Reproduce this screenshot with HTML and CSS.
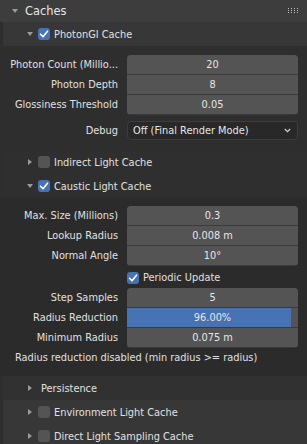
FILE: index.html
```html
<!DOCTYPE html>
<html>
<head>
<meta charset="utf-8">
<link rel="stylesheet" href="styles.css">
</head>
<body>
<div class="panel">
  <div class="hdr main">
    <svg class="tri" width="6" height="6" viewBox="0 0 6 6"><polygon points="0,1 6,1 3,5" /></svg>
    <span class="title">Caches</span>
    <svg class="grip" width="11" height="6" viewBox="0 0 11 6">
      <rect x="0" y="0" width="1" height="1"/><rect x="3" y="0" width="1" height="1"/><rect x="6" y="0" width="1" height="1"/><rect x="9" y="0" width="1" height="1"/>
      <rect x="0" y="2" width="1" height="1"/><rect x="3" y="2" width="1" height="1"/><rect x="6" y="2" width="1" height="1"/><rect x="9" y="2" width="1" height="1"/>
      <rect x="0" y="4" width="1" height="1"/><rect x="3" y="4" width="1" height="1"/><rect x="6" y="4" width="1" height="1"/><rect x="9" y="4" width="1" height="1"/>
    </svg>
  </div>

  <div class="hdr sub open">
    <svg class="tri" width="6" height="6" viewBox="0 0 6 6"><polygon points="0,1 6,1 3,5" /></svg>
    <span class="cb on"><svg width="12" height="12" viewBox="0 0 12 12"><polyline points="2.5,6.2 5,8.7 9.5,3.2"/></svg></span>
    <span class="title">PhotonGI Cache</span>
  </div>
  <div class="body photon">
    <div class="group">
      <div class="labels">
        <div class="lbl">Photon Count (Millio...</div>
        <div class="lbl">Photon Depth</div>
        <div class="lbl">Glossiness Threshold</div>
      </div>
      <div class="fields">
        <div class="field">20</div>
        <div class="field">8</div>
        <div class="field">0.05</div>
      </div>
    </div>
    <div class="group debug">
      <div class="labels"><div class="lbl">Debug</div></div>
      <div class="menu"><span>Off (Final Render Mode)</span>
        <svg class="chev" width="7" height="5" viewBox="0 0 7 5"><polyline points="0.8,1 3.5,3.7 6.2,1"/></svg>
      </div>
    </div>
  </div>

  <div class="hdr sub closed">
    <svg class="tri" width="6" height="6" viewBox="0 0 6 6"><polygon points="1,0 5,3 1,6" /></svg>
    <span class="cb"></span>
    <span class="title">Indirect Light Cache</span>
  </div>
  <div class="hdr sub open2">
    <svg class="tri" width="6" height="6" viewBox="0 0 6 6"><polygon points="0,1 6,1 3,5" /></svg>
    <span class="cb on"><svg width="12" height="12" viewBox="0 0 12 12"><polyline points="2.5,6.2 5,8.7 9.5,3.2"/></svg></span>
    <span class="title">Caustic Light Cache</span>
  </div>
  <div class="body caustic">
    <div class="group">
      <div class="labels">
        <div class="lbl">Max. Size (Millions)</div>
        <div class="lbl">Lookup Radius</div>
        <div class="lbl">Normal Angle</div>
      </div>
      <div class="fields">
        <div class="field">0.3</div>
        <div class="field">0.008 m</div>
        <div class="field">10°</div>
      </div>
    </div>
    <div class="checkrow">
      <span class="cb on"><svg width="12" height="12" viewBox="0 0 12 12"><polyline points="2.5,6.2 5,8.7 9.5,3.2"/></svg></span>
      <span class="clabel">Periodic Update</span>
    </div>
    <div class="group">
      <div class="labels">
        <div class="lbl">Step Samples</div>
        <div class="lbl">Radius Reduction</div>
        <div class="lbl">Minimum Radius</div>
      </div>
      <div class="fields">
        <div class="field">5</div>
        <div class="field slider"><div class="fill" style="width:96%"></div><span>96.00%</span></div>
        <div class="field">0.075 m</div>
      </div>
    </div>
    <div class="info">Radius reduction disabled (min radius &gt;= radius)</div>
  </div>

  <div class="hdr sub persist">
    <svg class="tri" width="6" height="6" viewBox="0 0 6 6"><polygon points="1,0 5,3 1,6" /></svg>
    <span class="title">Persistence</span>
  </div>
  <div class="hdr sub env">
    <svg class="tri" width="6" height="6" viewBox="0 0 6 6"><polygon points="1,0 5,3 1,6" /></svg>
    <span class="cb"></span>
    <span class="title">Environment Light Cache</span>
  </div>
  <div class="hdr sub env">
    <svg class="tri" width="6" height="6" viewBox="0 0 6 6"><polygon points="1,0 5,3 1,6" /></svg>
    <span class="cb"></span>
    <span class="title">Direct Light Sampling Cache</span>
  </div>
</div>
</body>
</html>
```
FILE: styles.css
```css
* { box-sizing: border-box; }
html, body { margin: 0; padding: 0; }
body {
  width: 307px;
  height: 444px;
  overflow: hidden;
  background: #2e2e2e;
  font-family: "DejaVu Sans", sans-serif;
  font-size: 9.8px;
  color: #e1e1e1;
}
.panel { display: flex; flex-direction: column; }

.hdr {
  display: flex;
  align-items: center;
  white-space: nowrap;
}
.hdr .tri { fill: #9a9a9a; flex: none; }
.hdr.main {
  height: 22px;
  background: #3d3d3d;
  padding-left: 12px;
  font-size: 11.4px;
}
.hdr.main .title { margin-left: 7px; color: #e6e6e6; }
.hdr.main .grip { margin-left: auto; margin-right: 8px; fill: #bdbdbd; }

.hdr.sub {
  height: 24px;
  padding-left: 24px;
  background: #373737;
  border-left: 3px solid #2e2e2e;
}
.hdr.sub .cb { margin-left: 5px; }
.hdr.sub .title { margin-left: 4px; }
.hdr.sub.closed, .hdr.sub.open2 { background: #2f2f2f; border-left-color: #2e2e2e; }
.hdr.persist { background: #313131; }
.hdr.persist .title { margin-left: 8px; }
.hdr.env { background: #373737; }

.cb {
  width: 12px;
  height: 12px;
  border-radius: 3px;
  background: #545454;
  display: inline-flex;
  flex: none;
}
.cb.on { background: #4772b3; }
.cb svg polyline { fill: none; stroke: #ffffff; stroke-width: 1.6; stroke-linecap: round; stroke-linejoin: round; }

.body { padding-right: 9px; }
.body.photon { padding-top: 9px; padding-bottom: 9px; background: #2e2e2e; }
.body.caustic { padding-top: 8px; padding-bottom: 8px; background: #2b2b2b; }

.group { display: flex; }
.labels { width: 118px; margin-right: 9px; flex: none; }
.lbl {
  height: 20px;
  line-height: 20px;
  text-align: right;
  white-space: nowrap;
  overflow: hidden;
}
.fields {
  width: 171px;
  display: flex;
  flex-direction: column;
  gap: 1px;
  border-radius: 4px;
  overflow: hidden;
  background: #3b3b3b;
}
.field {
  height: 19px;
  line-height: 19px;
  background: #545454;
  text-align: center;
  color: #e6e6e6;
  position: relative;
}
.slider .fill {
  position: absolute;
  left: 0; top: 0; bottom: 0;
  background: #4772b3;
}
.slider span { position: relative; }

.group.debug { margin-top: 6px; }
.menu {
  width: 171px;
  height: 19px;
  border-radius: 4px;
  background: #282828;
  border: 1px solid #3d3d3d;
  display: flex;
  align-items: center;
  padding-left: 5px;
  padding-right: 6px;
  color: #e6e6e6;
}
.menu .chev { margin-left: auto; }
.menu .chev polyline { fill: none; stroke: #d0d0d0; stroke-width: 1.2; }

.checkrow {
  height: 21px;
  margin-top: 1px;
  display: flex;
  align-items: center;
  padding-left: 127px;
}
.clabel { margin-left: 4px; }

.info {
  height: 20px;
  line-height: 20px;
  padding-left: 15px;
  white-space: nowrap;
}
```
